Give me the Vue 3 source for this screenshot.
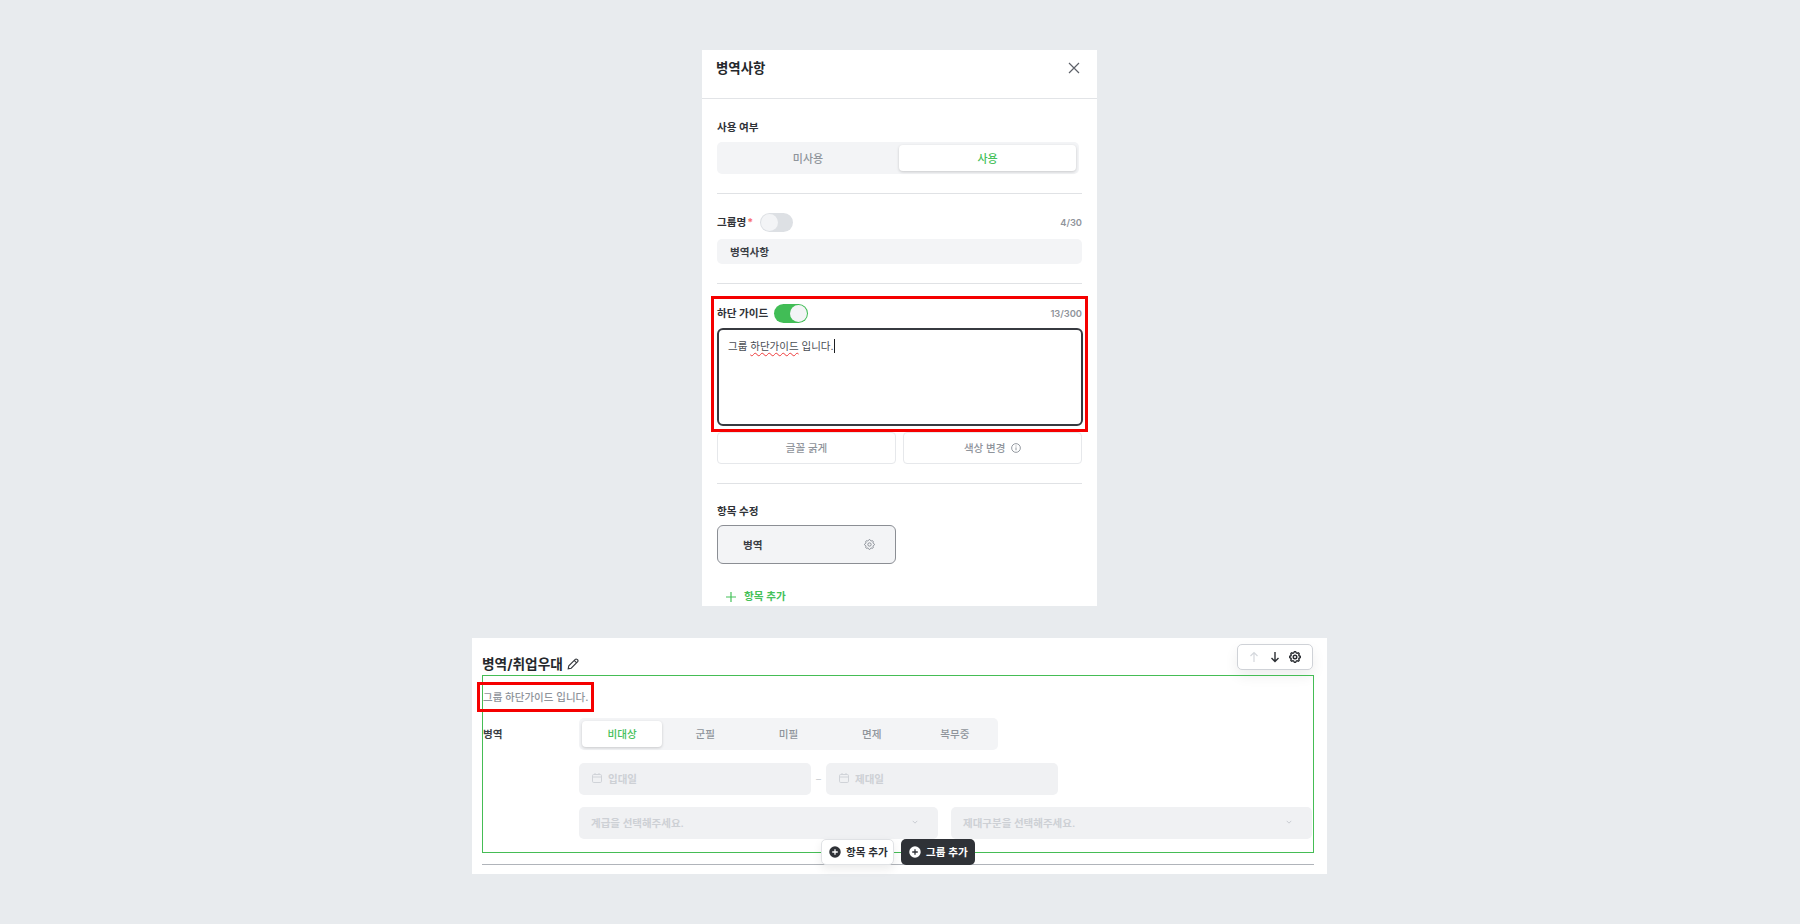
<script setup>
const militaryTabs = ['비대상', '군필', '미필', '면제', '복무중'];
const gearPath = 'M10.325 4.317c.426-1.756 2.924-1.756 3.35 0a1.724 1.724 0 0 0 2.573 1.066c1.543-.94 3.31.826 2.37 2.37a1.724 1.724 0 0 0 1.065 2.572c1.756.426 1.756 2.924 0 3.35a1.724 1.724 0 0 0-1.066 2.573c.94 1.543-.826 3.31-2.37 2.37a1.724 1.724 0 0 0-2.572 1.065c-.426 1.756-2.924 1.756-3.35 0a1.724 1.724 0 0 0-2.573-1.066c-1.543.94-3.31-.826-2.37-2.37a1.724 1.724 0 0 0-1.065-2.572c-1.756-.426-1.756-2.924 0-3.35a1.724 1.724 0 0 0 1.066-2.573c-.94-1.543.826-3.31 2.37-2.37 1 .608 2.296.07 2.572-1.065z';
</script>

<template>
  <div class="page">
    <!-- 설정 패널 -->
    <section class="panel">
      <header class="panel-head">
        <h2>병역사항</h2>
        <svg class="close" width="14" height="14" viewBox="0 0 14 14"><path d="M2 2l10 10M12 2L2 12" stroke="#5d6169" stroke-width="1.2" fill="none" /></svg>
      </header>
      <div class="panel-body">
        <div class="block use-block">
          <div class="label">사용 여부</div>
          <div class="seg use-seg">
            <span class="seg-item">미사용</span>
            <span class="seg-item on">사용</span>
          </div>
        </div>
        <div class="block name-block">
          <div class="field-head">
            <span class="label">그룹명<i>*</i></span>
            <span class="toggle"></span>
            <span class="count">4/30</span>
          </div>
          <div class="input">병역사항</div>
        </div>
        <div class="block guide-block">
          <div class="red-box guide-mark"></div>
          <div class="field-head">
            <span class="label">하단 가이드</span>
            <span class="toggle active"></span>
            <span class="count">13/300</span>
          </div>
          <div class="textarea">그룹 <u>하단가이드</u> 입니다.<b class="caret"></b></div>
          <div class="btn-row">
            <button>글꼴 굵게</button>
            <button>
              색상 변경
              <svg width="10" height="10" viewBox="0 0 11 11"><circle cx="5.5" cy="5.5" r="4.8" stroke="#8a8f97" fill="none" /><path d="M5.5 4.8v3.2M5.5 2.8v1" stroke="#8a8f97" fill="none" /></svg>
            </button>
          </div>
        </div>
        <div class="block item-block">
          <div class="label">항목 수정</div>
          <div class="item-card">
            <span>병역</span>
            <svg width="11" height="11" viewBox="2 2 20 20" fill="none" stroke="#8a8f97" stroke-width="1.8"><path :d="gearPath" /><circle cx="12" cy="12" r="3" /></svg>
          </div>
          <div class="add-link">
            <svg width="10" height="10" viewBox="0 0 10 10"><path d="M5 0v10M0 5h10" stroke="#45c15a" stroke-width="1.2" fill="none" /></svg>
            항목 추가
          </div>
        </div>
      </div>
    </section>

    <!-- 미리보기 -->
    <section class="preview">
      <div class="toolbar">
        <svg width="12" height="12" viewBox="0 0 12 12" fill="none" stroke="#d5d8dd" stroke-width="1.2"><path d="M6 11V1.5M2.5 5L6 1.5 9.5 5" /></svg>
        <svg width="12" height="12" viewBox="0 0 12 12" fill="none" stroke="#2b2e33" stroke-width="1.4"><path d="M6 1v9.5M2.5 7L6 10.5 9.5 7" /></svg>
        <svg width="12" height="12" viewBox="2 2 20 20" fill="none" stroke="#2b2e33" stroke-width="2.4"><path :d="gearPath" /><circle cx="12" cy="12" r="3" /></svg>
      </div>
      <h3>
        병역/취업우대
        <svg width="12" height="12" viewBox="0 0 12 12" fill="none" stroke="#33363b" stroke-width="1.1"><path d="M1.2 10.8l.6-3L8.3 1.3a1.2 1.2 0 0 1 1.7 0l.7.7a1.2 1.2 0 0 1 0 1.7L4.2 10.2z M7.2 2.4l2.4 2.4" /></svg>
      </h3>
      <div class="group">
        <div class="red-box text-mark"></div>
        <p class="guide">그룹 하단가이드 입니다.</p>
        <div class="row">
          <span class="row-label">병역</span>
          <div class="row-fields">
            <div class="seg mil-seg">
              <span v-for="(tab, i) in militaryTabs" :key="tab" class="seg-item" :class="{ on: i === 0 }">{{ tab }}</span>
            </div>
            <div class="dates">
              <div class="disabled date">
                <svg width="12" height="12" viewBox="0 0 12 12" fill="none" stroke="#d0d3d8"><rect x="1.5" y="2.5" width="9" height="8" rx="1.2" /><path d="M1.5 5h9M4 1v2M8 1v2" /></svg>
                입대일
              </div>
              <span class="dash">–</span>
              <div class="disabled date">
                <svg width="12" height="12" viewBox="0 0 12 12" fill="none" stroke="#d0d3d8"><rect x="1.5" y="2.5" width="9" height="8" rx="1.2" /><path d="M1.5 5h9M4 1v2M8 1v2" /></svg>
                제대일
              </div>
            </div>
            <div class="selects">
              <div class="disabled select rank">
                계급을 선택해주세요.
                <svg width="6" height="6" viewBox="0 0 8 8" fill="none" stroke="#c9ccd1" stroke-width="1.3"><path d="M1 2.5L4 5.5 7 2.5" /></svg>
              </div>
              <div class="disabled select discharge">
                제대구분을 선택해주세요.
                <svg width="6" height="6" viewBox="0 0 8 8" fill="none" stroke="#c9ccd1" stroke-width="1.3"><path d="M1 2.5L4 5.5 7 2.5" /></svg>
              </div>
            </div>
          </div>
        </div>
        <div class="float-btns">
          <button class="float light">
            <svg width="12" height="12" viewBox="0 0 13 13"><circle cx="6.5" cy="6.5" r="6.2" fill="#2f3237" /><path d="M6.5 3.5v6M3.5 6.5h6" stroke="#fff" stroke-width="1.4" /></svg>
            <span>항목 추가</span>
          </button>
          <button class="float dark">
            <svg width="12" height="12" viewBox="0 0 13 13"><circle cx="6.5" cy="6.5" r="6.2" fill="#fff" /><path d="M6.5 3.5v6M3.5 6.5h6" stroke="#2f3237" stroke-width="1.4" /></svg>
            <span>그룹 추가</span>
          </button>
        </div>
      </div>
      <div class="bottom-line"></div>
    </section>
  </div>
</template>

<style scoped>
.page {
  min-height: 924px;
  box-sizing: border-box;
  padding: 50px 1px 0 0;
  background: #e8ebee;
  display: flex;
  flex-direction: column;
  align-items: center;
  gap: 32px;
  font-family: "Inter", "Noto Sans CJK KR", sans-serif;
  color: #2b2e33;
}

.panel {
  width: 395px;
  height: 556px;
  background: #fff;
  overflow: hidden;
}

.panel-head {
  height: 48px;
  box-sizing: content-box;
  border-bottom: 1px solid #e2e4e7;
  padding: 0 16px 0 14px;
  display: flex;
  justify-content: space-between;
  align-items: center;
}

.panel-head h2 {
  margin: 0 0 15px;
  font-size: 13.4px;
  font-weight: 700;
  color: #25282c;
}

.close {
  margin-bottom: 12px;
}

.panel-body {
  padding: 0 15px;
}

.block {
  position: relative;
  border-bottom: 1px solid #e0e2e5;
}

.label {
  font-size: 10.6px;
  font-weight: 700;
  line-height: 18px;
  color: #2f3237;
}

.label i {
  color: #f87171;
  font-style: normal;
  margin-left: 1px;
}

.use-block {
  padding: 19px 0 19px;
}

.use-block .label {
  padding-top: 1px;
  margin-bottom: -1px;
}

.use-seg {
  margin-top: 6px;
  width: 362px;
}

.use-seg .seg-item {
  padding-right: 3px;
}

.use-seg .seg-item.on {
  flex: 0 0 177px;
  padding-right: 0;
}

.seg {
  height: 32px;
  box-sizing: border-box;
  padding: 3px;
  background: #f3f4f6;
  border-radius: 5px;
  display: flex;
}

.seg-item {
  flex: 1;
  display: flex;
  align-items: center;
  justify-content: center;
  padding-bottom: 1px;
  font-size: 11px;
  font-weight: 500;
  color: #8f949b;
  border-radius: 4px;
}

.seg-item.on {
  background: #fff;
  color: #45c15a;
  box-shadow: 0 1px 3px rgba(0, 0, 0, 0.18);
}

.field-head {
  display: flex;
  align-items: center;
  height: 19px;
}

.field-head .label {
  padding-top: 1px;
}

.toggle {
  position: relative;
  width: 33px;
  height: 19px;
  margin-left: 7px;
  background: #dde0e4;
  border-radius: 10px;
}

.toggle::after {
  content: '';
  position: absolute;
  left: 1px;
  top: 1px;
  width: 17px;
  height: 17px;
  border-radius: 50%;
  background: #f3f4f6;
}

.toggle.active {
  margin-left: 6px;
  width: 34px;
  background: #41bd56;
}

.toggle.active::after {
  left: 16px;
}

.count {
  margin-left: auto;
  font-size: 9.3px;
  font-weight: 600;
  color: #8f949b;
}

.name-block {
  padding: 19px 0 19px;
}

.input {
  margin-top: 7px;
  height: 25px;
  padding-left: 13px;
  background: #f3f4f6;
  border-radius: 5px;
  font-size: 10.6px;
  font-weight: 600;
  line-height: 27px;
  color: #3b3e44;
}

.guide-block {
  padding: 20px 0 19px;
}

.textarea {
  margin-top: 5px;
  height: 98px;
  width: 366px;
  box-sizing: border-box;
  padding: 9px 9px;
  border: 2px solid #373a40;
  border-radius: 6px;
  font-size: 10.5px;
  line-height: 16px;
  color: #4a4d53;
  white-space: pre;
}

.textarea u {
  text-decoration: underline wavy #ee3b3b 1px;
  text-underline-offset: 2px;
}

.caret {
  display: inline-block;
  width: 1px;
  height: 14px;
  background: #1c1e21;
  vertical-align: -3px;
}

.btn-row {
  margin-top: 6px;
  display: grid;
  grid-template-columns: 179px 179px;
  gap: 7px;
}

.btn-row button {
  height: 32px;
  padding: 0 0 2px;
  background: #fff;
  border: 1px solid #e6e8eb;
  border-radius: 4px;
  font: 500 10.5px "Inter", "Noto Sans CJK KR", sans-serif;
  color: #8f949b;
}

.btn-row svg {
  margin-left: 3px;
  vertical-align: -1.5px;
}

.item-block {
  border-bottom: none;
  padding-top: 19px;
}

.item-card {
  margin-top: 4px;
  width: 179px;
  height: 39px;
  box-sizing: border-box;
  padding: 0 20px 0 25px;
  background: #f3f4f6;
  border: 1px solid #8b8e94;
  border-radius: 6px;
  display: flex;
  align-items: center;
  justify-content: space-between;
  font-size: 10.6px;
  font-weight: 600;
  color: #3b3e44;
}

.add-link {
  margin: 24px 0 0 9px;
  display: flex;
  align-items: center;
  gap: 8px;
  font-size: 10.6px;
  font-weight: 600;
  line-height: 18px;
  color: #45c15a;
}

.preview {
  position: relative;
  width: 855px;
  height: 236px;
  box-sizing: border-box;
  padding: 0 13px 0 10px;
  background: #fff;
}

.preview h3 {
  margin: 0;
  height: 37px;
  padding-top: 14px;
  box-sizing: border-box;
  font-size: 13.7px;
  font-weight: 700;
  line-height: 22px;
  color: #25282c;
  display: flex;
  align-items: center;
  gap: 4px;
}

.toolbar {
  position: absolute;
  top: 6px;
  right: 14px;
  width: 76px;
  height: 26px;
  box-sizing: border-box;
  padding: 0 11px 0 10px;
  background: #fff;
  border: 1px solid #cfd2d7;
  border-radius: 5px;
  box-shadow: 0 6px 14px rgba(0, 0, 0, 0.07);
  display: flex;
  align-items: center;
  justify-content: space-between;
}

.group {
  position: relative;
  height: 178px;
  box-sizing: border-box;
  border: 1px solid #45bd55;
}

.guide {
  margin: 0;
  padding-top: 12px;
  height: 30px;
  box-sizing: content-box;
  font-size: 10.5px;
  font-weight: 500;
  line-height: 20px;
  color: #8f949b;
}

.row {
  display: flex;
}

.row-label {
  width: 96px;
  padding-top: 1px;
  font-size: 10.6px;
  font-weight: 700;
  line-height: 32px;
  color: #3b3e44;
}

.row-fields {
  flex: 1;
  display: flex;
  flex-direction: column;
  gap: 13px;
}

.mil-seg {
  width: 419px;
  padding: 3px 1.5px;
}

.mil-seg .seg-item {
  flex: 0 0 83.2px;
  font-size: 10.6px;
}

.mil-seg .seg-item.on {
  flex-basis: 80px;
  margin: 0 1.6px;
}

.dates {
  display: flex;
  align-items: center;
}

.disabled {
  height: 32px;
  box-sizing: border-box;
  padding: 0 12px 2px;
  background: #f0f1f3;
  border-radius: 5px;
  display: flex;
  align-items: center;
  font-size: 10.5px;
  font-weight: 600;
  color: #cdd0d5;
}

.date {
  width: 232px;
  gap: 5px;
}

.dash {
  width: 15px;
  text-align: center;
  font-size: 10px;
  color: #c9ccd1;
}

.selects {
  display: flex;
  gap: 13px;
  margin-top: -1px;
}

.select {
  justify-content: space-between;
  padding-right: 20px;
}

.rank {
  width: 359px;
}

.discharge {
  width: 361px;
}

.float-btns {
  position: absolute;
  left: 338px;
  top: 163px;
  display: flex;
  gap: 7px;
}

.float {
  height: 26px;
  box-sizing: border-box;
  padding: 0 0 0 8px;
  border-radius: 5px;
  display: flex;
  align-items: center;
  gap: 5px;
  white-space: nowrap;
  font: 600 10.6px "Inter", "Noto Sans CJK KR", sans-serif;
}

.float svg {
  flex: none;
}

.float span {
  margin-top: -2px;
}

.float.light {
  width: 73px;
  padding-left: 7px;
  background: #fff;
  color: #2b2e33;
  border: 1px solid #e0e2e5;
  box-shadow: 0 4px 10px rgba(0, 0, 0, 0.08);
}

.float.dark {
  width: 74px;
  background: #2f3237;
  color: #fff;
  border: none;
}

.bottom-line {
  margin-top: 11px;
  height: 1px;
  background: #b0b4ba;
}

.red-box {
  position: absolute;
  box-sizing: border-box;
  border: 3px solid #f50000;
  pointer-events: none;
}

.guide-mark {
  left: -6px;
  top: 12px;
  width: 377px;
  height: 136px;
}

.text-mark {
  left: -6px;
  top: 6px;
  width: 117px;
  height: 30px;
}
</style>
